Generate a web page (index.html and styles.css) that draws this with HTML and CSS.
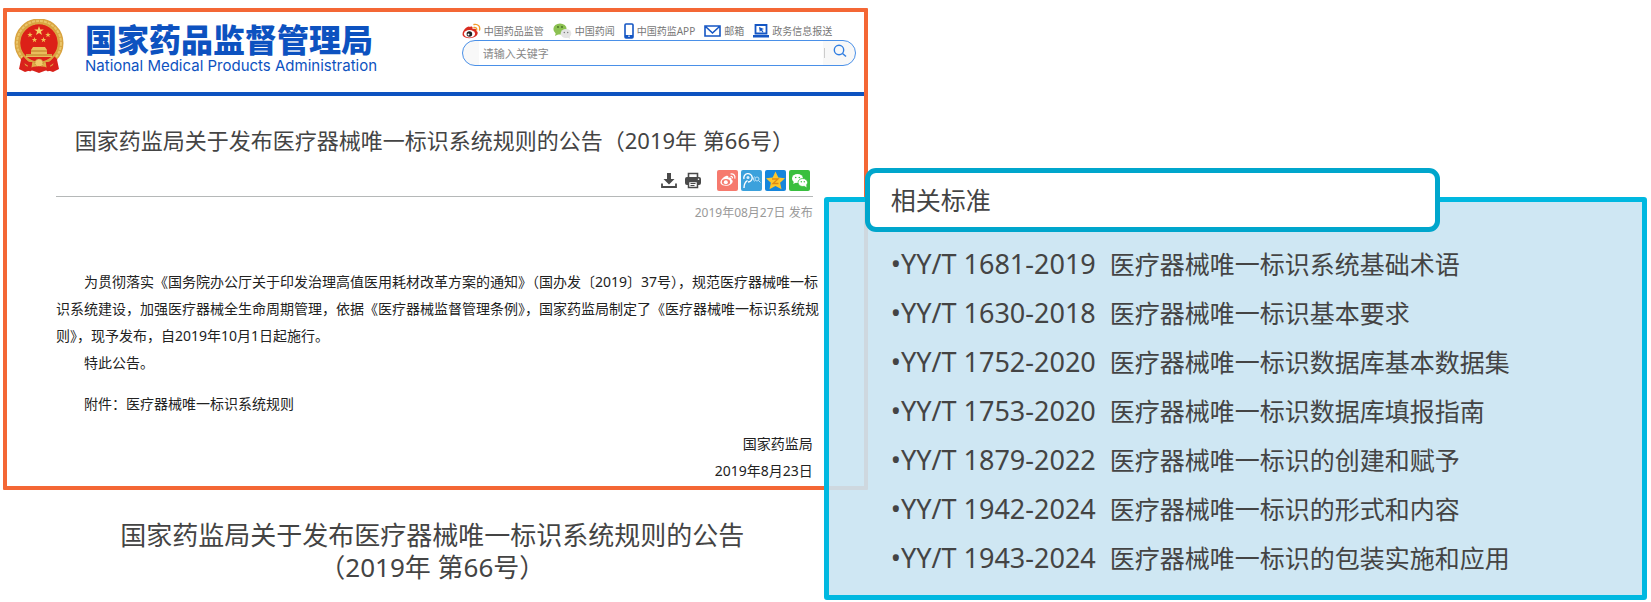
FILE: index.html
```html
<!DOCTYPE html>
<html lang="zh-CN">
<head>
    <meta charset="UTF-8">
    <meta name="viewport" content="width=device-width, initial-scale=1.0">
    <title>医疗器械唯一标识系统规则</title>
    <link rel="stylesheet" href="styles.css">
</head>
<body>
    <main class="slide">
        <section class="left">
            <article class="notice">
                <header class="site-header">
                    <svg class="emblem" viewBox="0 0 50 54">
                        <path d="M8 36 L5 50 L11 53 L17 51 L25 54 L33 51 L39 53 L45 50 L42 36Z" fill="#d9211b"/>
                        <circle cx="25" cy="24" r="21.5" fill="#e3241b" stroke="#d9a441" stroke-width="6"/>
                        <circle cx="25" cy="24" r="22" fill="none" stroke="#e9c468" stroke-width="2" stroke-dasharray="3 1"/>
                        <circle cx="25" cy="24" r="18.5" fill="#dc2018"/>
                        <path d="M25 7l1.200 3.400h3.600l-2.900 2.200 1.100 3.500-3-2.100-3 2.100 1.100-3.500-2.900-2.200h3.600z" fill="#f6d368"/>
                        <path d="M16 13l.7 1.900h2l-1.600 1.300.6 2-1.700-1.200-1.700 1.200.6-2-1.600-1.300h2zM34 13l.7 1.900h2l-1.600 1.300.6 2-1.700-1.200-1.700 1.200.6-2-1.600-1.300h2zM20.500 18l.7 1.900h2l-1.600 1.300.6 2-1.700-1.200-1.700 1.200.6-2-1.600-1.300h2zM29.500 18l.7 1.900h2l-1.600 1.300.6 2-1.700-1.200-1.700 1.200.6-2-1.600-1.300h2z" fill="#f0c050"/>
                        <path d="M19 28h12l2 3v4h5v3H12v-3h5v-4z" fill="#e9bd5b"/>
                        <path d="M17 32h16M12 36h26" stroke="#bd7b25" stroke-width="1"/>
                        <path d="M9 36c4 7 10 9 16 9s12-2 16-9l-2 10c-4 3-8 4-14 4s-10-1-14-4z" fill="#e0ae48"/>
                        <path d="M8 39c3 3 5 6 8 6l-1 7M42 39c-3 3-5 6-8 6l1 7" fill="none" stroke="#d9211b" stroke-width="4"/>
                        <circle cx="25" cy="44" r="4" fill="#f1ca69" stroke="#b9812e" stroke-dasharray="1 1"/>
                        <path d="M15 51c6-3 14-3 20 0" fill="none" stroke="#d9211b" stroke-width="3"/>
                    </svg>
                    <div class="brand">
                        <div class="brand-cn">国家药品监督管理局</div>
                        <div class="brand-en">National Medical Products Administration</div>
                    </div>
                    <div class="header-tools">
                        <nav class="quick-links">
                            <a href="#">
                                <svg width="19" height="16" viewBox="0 0 19 16">
                                    <path d="M8 4c2-1 3 0 2.500 2 3-1 4.500.2 3.700 2 2 .6 2 3 .3 4.800C11 16 3 16 .8 12.600-.5 9 4 3.600 7 3.600z" fill="#d92b20"/>
                                    <ellipse cx="7.500" cy="10.800" rx="5.600" ry="3.700" fill="#fff"/>
                                    <circle cx="7.400" cy="11" r="2.800" fill="#222"/>
                                    <circle cx="6.500" cy="11.500" r="1" fill="#fff"/>
                                    <path d="M12 4.500c2-.4 3 .8 2.600 2.500M12 1.500c4-.8 6.500 2 5.500 5.500" fill="none" stroke="#f39a2b" stroke-width="1.400" stroke-linecap="round"/>
                                </svg>
                                中国药品监管
                            </a>
                            <a href="#">
                                <svg width="19" height="16" viewBox="0 0 19 16">
                                    <ellipse cx="7" cy="6" rx="6.600" ry="5.500" fill="#8cc152"/>
                                    <path d="M3 9l-1 4 4-2z" fill="#8cc152"/>
                                    <circle cx="5" cy="4" r=".9" fill="#456d22"/><circle cx="9" cy="4" r=".9" fill="#456d22"/>
                                    <ellipse cx="13" cy="10.500" rx="5.300" ry="4.500" fill="#e4e4e4"/>
                                    <path d="M14 14l3 2-.5-3z" fill="#e4e4e4"/>
                                    <circle cx="11.300" cy="9.500" r=".7" fill="#777"/><circle cx="14.700" cy="9.500" r=".7" fill="#777"/>
                                </svg>
                                中国药闻
                            </a>
                            <a href="#">
                                <svg width="10" height="16" viewBox="0 0 10 16">
                                    <rect x="1" y="1" width="8" height="14" rx="1" fill="#fff" stroke="#1456c4" stroke-width="1.600"/>
                                    <path d="M1 12h8v3H1z" fill="#1456c4"/><circle cx="5" cy="13.300" r=".8" fill="#fff"/>
                                </svg>
                                中国药监APP
                            </a>
                            <a href="#">
                                <svg width="17" height="12" viewBox="0 0 17 12">
                                    <path d="M1 1h15v10H1zM2 2l6.500 6L15 2" fill="none" stroke="#1456c4" stroke-width="1.600"/>
                                </svg>
                                邮箱
                            </a>
                            <a href="#">
                                <svg width="16" height="14" viewBox="0 0 16 14">
                                    <path d="M2.500 1h11v8.500h-11z" fill="none" stroke="#1456c4" stroke-width="1.800"/>
                                    <path d="M0 11h16v2.500H0z" fill="#1456c4"/>
                                    <path d="M6 3l5 2-2 .8L10.500 8l-1 .6L8 6.500 6.800 8z" fill="#1456c4"/>
                                </svg>
                                政务信息报送
                            </a>
                        </nav>
                        <form class="search">
                            <input type="text" placeholder="请输入关键字" aria-label="请输入关键字">
                            <button type="button" aria-label="搜索">
                                <svg width="14" height="14" viewBox="0 0 14 14">
                                    <circle cx="6" cy="6" r="4.700" fill="none" stroke="#2f7de1" stroke-width="1.400"/>
                                    <path d="M9.500 9.500L13 12.500" stroke="#2f7de1" stroke-width="1.500"/>
                                </svg>
                            </button>
                        </form>
                    </div>
                </header>

                <div class="notice-content">
                    <h1>国家药监局关于发布医疗器械唯一标识系统规则的公告（2019年 第66号）</h1>
                    <div class="actions">
                        <button type="button" aria-label="下载">
                            <svg width="16" height="17" viewBox="0 0 16 17">
                                <path d="M6 1h4v6h3.500L8 12.500 2.500 7H6z" fill="#4a4a4a"/>
                                <path d="M1 11.500V15h14v-3.500" fill="none" stroke="#4a4a4a" stroke-width="1.800"/>
                            </svg>
                        </button>
                        <button type="button" class="print" aria-label="打印">
                            <svg width="16" height="17" viewBox="0 0 16 17">
                                <path d="M3.500 5V1.500h9V5" fill="none" stroke="#4a4a4a" stroke-width="1.600"/>
                                <rect x="0" y="5" width="16" height="8" rx="2" fill="#4a4a4a"/>
                                <path d="M3.500 9.500h9v6h-9z" fill="#fff" stroke="#4a4a4a" stroke-width="1.500"/>
                                <path d="M5.500 11.500h5M5.500 13.500h4" stroke="#4a4a4a"/>
                                <circle cx="13.500" cy="7.200" r=".8" fill="#fff"/>
                            </svg>
                        </button>
                        <a href="#" aria-label="微博">
                            <svg width="21" height="21" viewBox="0 0 21 21">
                                <rect width="21" height="21" rx="2" fill="#f67a6e"/>
                                <path d="M9 6c1.800-.8 2.800 0 2.300 1.800 2.500-.8 3.600.2 3 1.600 2 .8 1.800 3-.1 4.500-3 2.600-9 2.500-10.500-.3C2.500 11 6 7 9 6z" fill="#fff"/>
                                <ellipse cx="9" cy="12" rx="4.200" ry="2.900" fill="#f67a6e"/>
                                <circle cx="8.800" cy="12.200" r="2" fill="#fff"/>
                                <path d="M13.500 6.500c1.500-.3 2.200.6 1.900 1.900M13.500 4c3.200-.5 5 1.700 4.300 4.600" fill="none" stroke="#fff" stroke-width="1.200"/>
                            </svg>
                        </a>
                        <a href="#" aria-label="腾讯微博">
                            <svg width="21" height="21" viewBox="0 0 21 21">
                                <rect width="21" height="21" rx="2" fill="#3ba1dc"/>
                                <path d="M3 18c0-4 1-6 3.500-7.500M3 9a4.200 4.200 0 1 1 4 3" fill="none" stroke="#fff" stroke-width="1.400"/>
                                <circle cx="7" cy="7.500" r="1.500" fill="#d8f0ff"/>
                                <circle cx="16" cy="9" r="2" fill="none" stroke="#b9e0f7"/>
                                <path d="M13.500 6.500a3.500 3.500 0 0 0 0 5M17.500 10.500l2 2" fill="none" stroke="#b9e0f7"/>
                            </svg>
                        </a>
                        <a href="#" aria-label="QQ空间">
                            <svg width="21" height="21" viewBox="0 0 21 21">
                                <rect width="21" height="21" rx="2" fill="#1586dc"/>
                                <path d="M10.500 1.500l2.800 6 6.700.8-4.900 4.400 1.400 6.600-6-3.300-6 3.300 1.400-6.600L1 8.300l6.700-.8z" fill="#fdc62b"/>
                                <path d="M7 9h6l-5 4.500h5.500" fill="none" stroke="#e08a12" stroke-width="1.300"/>
                            </svg>
                        </a>
                        <a href="#" aria-label="微信">
                            <svg width="21" height="21" viewBox="0 0 21 21">
                                <rect width="21" height="21" rx="2" fill="#39bf3e"/>
                                <ellipse cx="8.500" cy="8.500" rx="5.500" ry="4.600" fill="#fff"/>
                                <path d="M5 11l-.8 3 3-1.500z" fill="#fff"/>
                                <ellipse cx="13.800" cy="12.500" rx="4.800" ry="4" fill="#fff" stroke="#39bf3e" stroke-width=".8"/>
                                <path d="M15 15.500l2.500 2-.3-3z" fill="#fff"/>
                                <g fill="#39bf3e"><circle cx="6.700" cy="7.500" r=".8"/><circle cx="10.300" cy="7.500" r=".8"/><circle cx="12.300" cy="11.700" r=".7"/><circle cx="15.300" cy="11.700" r=".7"/></g>
                            </svg>
                        </a>
                    </div>
                    <div class="date">2019年08月27日 发布</div>
                    <div class="text">
                        <p>为贯彻落实《国务院办公厅关于印发治理高值医用耗材改革方案的通知》（国办发〔2019〕37号），规范医疗器械唯一标<br>识系统建设，加强医疗器械全生命周期管理，依据《医疗器械监督管理条例》，国家药监局制定了《医疗器械唯一标识系统规<br>则》，现予发布，自2019年10月1日起施行。</p>
                        <p>特此公告。</p>
                        <p class="attachment">附件：医疗器械唯一标识系统规则</p>
                        <div class="signature">国家药监局<br>2019年8月23日</div>
                    </div>
                </div>
            </article>
            <p class="caption">国家药监局关于发布医疗器械唯一标识系统规则的公告<br>（2019年 第66号）</p>
        </section>

        <section class="standards">
            <h2>相关标准</h2>
            <ul>
                <li><span class="code">•YY/T 1681-2019&nbsp; </span>医疗器械唯一标识系统基础术语</li>
                <li><span class="code">•YY/T 1630-2018&nbsp; </span>医疗器械唯一标识基本要求</li>
                <li><span class="code">•YY/T 1752-2020&nbsp; </span>医疗器械唯一标识数据库基本数据集</li>
                <li><span class="code">•YY/T 1753-2020&nbsp; </span>医疗器械唯一标识数据库填报指南</li>
                <li><span class="code">•YY/T 1879-2022&nbsp; </span>医疗器械唯一标识的创建和赋予</li>
                <li><span class="code">•YY/T 1942-2024&nbsp; </span>医疗器械唯一标识的形式和内容</li>
                <li><span class="code">•YY/T 1943-2024&nbsp; </span>医疗器械唯一标识的包装实施和应用</li>
            </ul>
        </section>
    </main>
</body>
</html>
```
FILE: styles.css
```css
* {
    box-sizing: border-box;
}

body {
    margin: 0;
    background-color: white;
    color: #444;
    font-family: "Noto Sans", "Noto Sans CJK SC", sans-serif;
}

h1, h2, p, ul {
    margin: 0;
    padding: 0;
    font-weight: 400;
}

svg {
    display: block;
    flex-shrink: 0;
}

button {
    padding: 0;
    border: none;
    background: none;
}

.slide {
    display: flex;
    align-items: flex-start;
    padding: 8px 4px 2px 3px;
}

.left {
    flex: 0 0 52.6%;
    min-width: 0;
}

/* notice page */
.notice {
    border: 4px solid #f46735;
    border-radius: 1px;
}

.site-header {
    display: flex;
    height: 84px;
    padding: 0 8px 0 7px;
    border-bottom: 4px solid #0d52c0;
}

.emblem {
    width: 50px;
    height: 54px;
    margin-top: 7px;
}

.brand {
    margin: 8px 0 0 21px;
    color: #0d52c0;
    white-space: nowrap;
}

.brand-cn {
    font-family: "Noto Sans CJK SC", sans-serif;
    font-size: 32px;
    font-weight: 900;
    line-height: 36px;
}

.brand-en {
    margin-top: 1px;
    font-family: Inter, "Liberation Sans", sans-serif;
    font-size: 15px;
    line-height: 18px;
}

.header-tools {
    width: 394px;
    margin: 9px 0 0 auto;
}

.quick-links {
    display: flex;
    gap: 9px;
    height: 19px;
}

.quick-links a {
    display: flex;
    align-items: center;
    gap: 3px;
    color: #777;
    font-size: 10px;
    text-decoration: none;
    white-space: nowrap;
}

.search {
    display: flex;
    height: 26px;
    border: 1px solid #4a90e8;
    border-radius: 13px;
    background-color: #f8f8f8;
    overflow: hidden;
}

.search input {
    flex: 1;
    min-width: 0;
    margin-left: 16px;
    padding: 0 4px;
    border: none;
    background-color: white;
    font-family: inherit;
    font-size: 11px;
}

.search input::placeholder {
    color: #888;
}

.search button {
    width: 32px;
    padding: 0 0 4px 10px;
    background: linear-gradient(#ccc, #ccc) 1px center / 1px 10px no-repeat;
}

.notice-content {
    padding: 26px 51px 2px 49px;
}

.notice h1 {
    display: flex;
    justify-content: center;
    color: #444;
    font-size: 22px;
    line-height: 36px;
    white-space: pre;
}

.actions {
    display: flex;
    align-items: center;
    justify-content: flex-end;
    gap: 3px;
    margin-top: 12px;
    padding: 0 3px 5px 0;
    border-bottom: 1px solid #b5b8b8;
}

.actions .print {
    margin: 0 13px 0 5px;
}

.date {
    margin-top: 7px;
    color: #999;
    font-size: 12px;
    line-height: 18px;
    text-align: right;
}

.text {
    margin-top: 46px;
    color: #222;
    font-size: 14px;
    line-height: 27px;
    white-space: nowrap;
}

.text p {
    text-indent: 2em;
}

.text .attachment {
    margin: 14px 0 13px;
}

.signature {
    text-align: right;
}

.caption {
    margin-top: 29px;
    padding-right: 6px;
    font-size: 26px;
    line-height: 32px;
    text-align: center;
}

/* related standards, overlaps the notice */
.standards {
    flex: 1;
    position: relative;
    margin: 189px 0 0 -44px;
    padding: 0 0 12px 36px;
    border: 5px solid #00b8e0;
    border-radius: 3px;
    background-color: rgba(202, 228, 242, 0.9);
    background-clip: padding-box;
    font-size: 25px;
}

.standards h2 {
    width: 74%;
    margin-top: -34px;
    padding-left: 21px;
    border: 5px solid #00a6cc;
    border-radius: 11px;
    background-color: white;
    font-size: 25px;
    line-height: 54px;
}

.standards ul {
    margin-top: 8px;
    padding-left: 26px;
    list-style: none;
}

.standards li {
    line-height: 49px;
    white-space: nowrap;
}

.code {
    font-size: 27px;
    line-height: 1;
}
```
